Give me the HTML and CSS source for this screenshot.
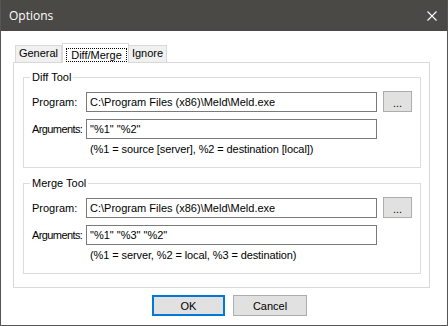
FILE: index.html
```html
<!DOCTYPE html>
<html lang="en">

<head>
    <meta charset="UTF-8">
    <meta name="viewport" content="width=device-width, initial-scale=1.0">
    <title>Options</title>

    <link rel="stylesheet" href="styles.css">
</head>

<body>
    <div class="window">
        <header class="titlebar">
            <span class="title">Options</span>
            <svg class="close-icon" width="10" height="10" viewBox="0 0 10 10" aria-label="Close">
                <path d="M0.5 0.5 L9.5 9.5 M9.5 0.5 L0.5 9.5" stroke="#ffffff" stroke-width="1.1" fill="none" />
            </svg>
        </header>

        <main class="dialog-body">
            <ul class="tabs">
                <li class="tab tab-general">General</li>
                <li class="tab tab-diff active"><span class="focus-rect">Diff/Merge</span></li>
                <li class="tab tab-ignore">Ignore</li>
            </ul>

            <section class="tab-page">
                <fieldset class="group">
                    <legend>Diff Tool</legend>
                    <div class="field-row">
                        <label>Program:</label>
                        <input class="textbox" type="text" value="C:\Program Files (x86)\Meld\Meld.exe">
                        <button class="browse-btn" type="button">...</button>
                    </div>
                    <div class="field-row">
                        <label class="label-tight">Arguments:</label>
                        <input class="textbox" type="text" value="&quot;%1&quot; &quot;%2&quot;">
                    </div>
                    <div class="hint">(%1 = source [server], %2 = destination [local])</div>
                </fieldset>

                <fieldset class="group">
                    <legend>Merge Tool</legend>
                    <div class="field-row">
                        <label>Program:</label>
                        <input class="textbox" type="text" value="C:\Program Files (x86)\Meld\Meld.exe">
                        <button class="browse-btn" type="button">...</button>
                    </div>
                    <div class="field-row">
                        <label class="label-tight">Arguments:</label>
                        <input class="textbox" type="text" value="&quot;%1&quot; &quot;%3&quot; &quot;%2&quot;">
                    </div>
                    <div class="hint">(%1 = server, %2 = local, %3 = destination)</div>
                </fieldset>
            </section>

            <div class="dialog-buttons">
                <button class="btn btn-default" type="button">OK</button>
                <button class="btn" type="button">Cancel</button>
            </div>
        </main>
    </div>
</body>

</html>
```

FILE: styles.css
```css
body,
body * {
    padding: 0;
    margin: 0;
    box-sizing: border-box;
}

body {
    background-color: #ffffff;
    font-family: 'Liberation Sans', Arial, sans-serif;
    font-size: 11px;
    color: #000000;
}

ul {
    list-style: none;
}

.window {
    width: 448px;
    height: 326px;
    border: 1px solid #565656;
    border-top-color: #4b4946;
    background-color: #ffffff;
    display: flex;
    flex-direction: column;
}

/* title bar */
.titlebar {
    height: 30px;
    background-color: #4b4946;
    color: #ffffff;
    display: flex;
    align-items: center;
    justify-content: space-between;
    padding: 0 10px 0 8px;
}

.titlebar .title {
    font-family: 'Segoe UI', 'Open Sans', sans-serif;
    font-size: 12px;
    margin-top: -1px;
}

.titlebar .close-icon {
    display: block;
    margin-top: -1px;
}

.dialog-body {
    padding: 12px 0 0 12px;
}

/* tabs */
.tabs {
    display: flex;
    align-items: flex-end;
    height: 19px;
    padding-left: 2px;
}

.tab {
    height: 17px;
    line-height: 15px;
    text-align: center;
    background-color: #f0f0f0;
    border: 1px solid #d9d9d9;
    border-bottom: none;
}

.tab-general {
    width: 47px;
}

.tab-diff {
    width: 67px;
}

.tab-ignore {
    width: 38px;
    border-left: none;
}

.tab.active {
    position: relative;
    z-index: 1;
    height: 20px;
    margin-bottom: -1px;
    background-color: #ffffff;
    padding-top: 4px;
}

.tab .focus-rect {
    display: block;
    margin: 0 1px 0 3px;
    height: 14px;
    line-height: 12px;
    border: 1px dotted #000000;
}

.tab-page {
    width: 417px;
    height: 226px;
    border: 1px solid #d9d9d9;
    display: flex;
    flex-direction: column;
}

/* group boxes */
.group {
    border: 1px solid #dcdcdc;
    margin: 8px 10px 0 9px;
    padding: 7px 8px 11px 8px;
}

.group+.group {
    margin-top: 9px;
}

.group legend {
    font-size: 11px;
    line-height: 13px;
    padding: 0 2px;
    margin-left: -2px;
}

.field-row {
    display: flex;
    align-items: center;
    height: 21px;
}

.field-row+.field-row {
    margin-top: 7px;
    height: 20px;
}

.field-row label {
    flex: 0 0 54px;
    width: 54px;
    white-space: nowrap;
}

.field-row .label-tight {
    letter-spacing: -0.6px;
}

.textbox {
    flex: 0 0 291px;
    width: 291px;
    height: 20px;
    border: 1px solid #7a7a7a;
    background-color: #ffffff;
    font-family: 'Liberation Sans', Arial, sans-serif;
    font-size: 11px;
    color: #000000;
    padding: 0 3px;
    outline: none;
}

.browse-btn {
    flex: 0 0 29px;
    width: 29px;
    height: 21px;
    margin-left: 6px;
    border: 1px solid #adadad;
    background-color: #e1e1e1;
    font-family: 'Liberation Sans', Arial, sans-serif;
    font-size: 11px;
    line-height: 11px;
    padding-top: 3px;
}

.hint {
    margin: 4px 0 0 58px;
    line-height: 13px;
    letter-spacing: -0.1px;
}

/* dialog buttons */
.dialog-buttons {
    display: flex;
    gap: 8px;
    margin: 7px 0 0 139px;
}

.btn {
    width: 73px;
    height: 21px;
    border: 1px solid #adadad;
    background-color: #e1e1e1;
    font-family: 'Liberation Sans', Arial, sans-serif;
    font-size: 11px;
    color: #000000;
}

.btn+.btn {
    width: 74px;
}

.btn-default {
    border: 2px solid #0078d7;
}
```
